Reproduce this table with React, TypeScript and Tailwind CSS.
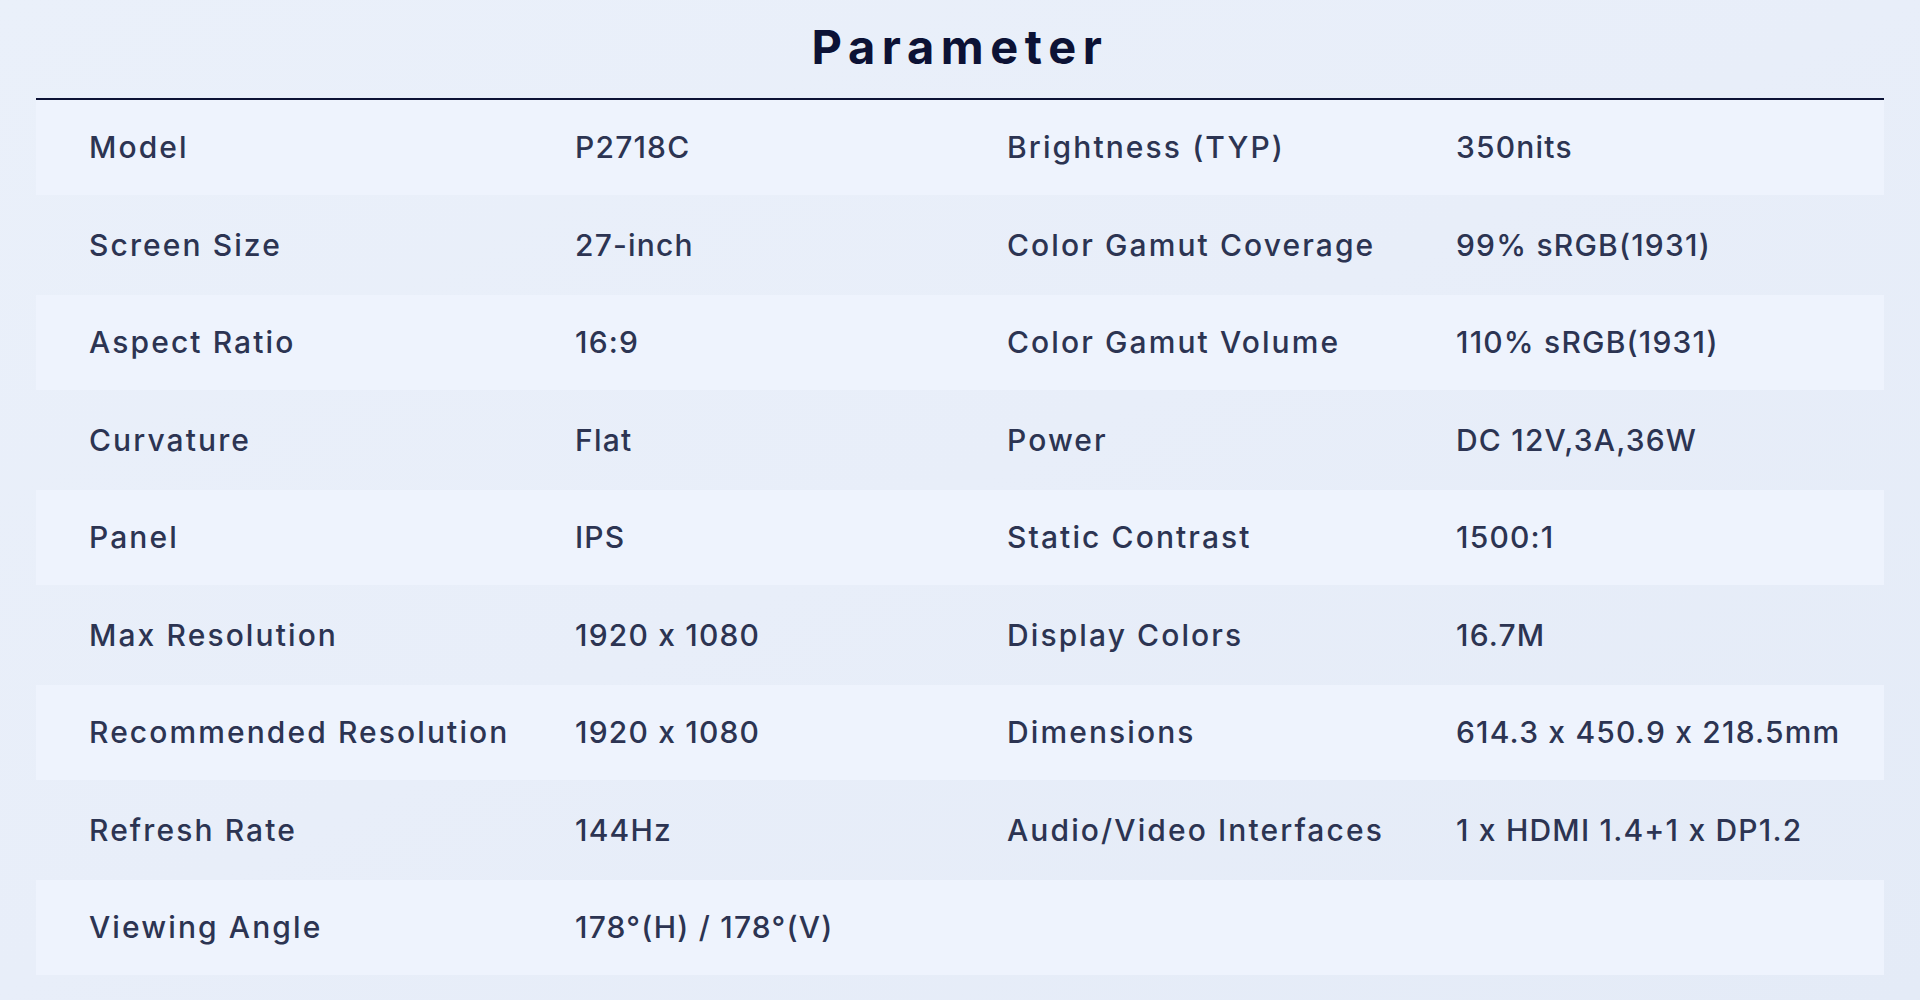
const rows: [string, string, string, string][] = [
  ["Model", "P2718C", "Brightness (TYP)", "350nits"],
  ["Screen Size", "27-inch", "Color Gamut Coverage", "99% sRGB(1931)"],
  ["Aspect Ratio", "16:9", "Color Gamut Volume", "110% sRGB(1931)"],
  ["Curvature", "Flat", "Power", "DC 12V,3A,36W"],
  ["Panel", "IPS", "Static Contrast", "1500:1"],
  ["Max Resolution", "1920 x 1080", "Display Colors", "16.7M"],
  ["Recommended Resolution", "1920 x 1080", "Dimensions", "614.3 x 450.9 x 218.5mm"],
  ["Refresh Rate", "144Hz", "Audio/Video Interfaces", "1 x HDMI 1.4+1 x DP1.2"],
  ["Viewing Angle", "178°(H) / 178°(V)", "", ""],
];

const App = () => {
  return (
    <div className="min-h-screen w-full bg-gradient-to-br from-[#eaf0fa] via-[#e8eef9] to-[#e4ebf7] font-['Inter','Open_Sans',sans-serif]">
      <div className="px-[36px]">
        <h1 className="flex h-[98px] items-center justify-center pb-[4px] text-[47px] font-bold tracking-[0.14em] text-[#0c1235]">
          Parameter
        </h1>
        <div className="h-[2px] bg-[#0c1235]" />
        <div className="flex flex-col">
          {rows.map((r, i) => (
            <div
              key={r[0]}
              className={
                i % 2 === 0
                  ? "flex h-[95px] items-center bg-[#eef3fd] text-[30px] font-medium text-[#2c3452]"
                  : "flex h-[100px] items-center text-[30px] font-medium text-[#2c3452]"
              }
            >
              <div className="w-[486px] shrink-0 pl-[53px] tracking-[0.07em]">{r[0]}</div>
              <div className="w-[432px] shrink-0 pl-[53px] tracking-[0.04em]">{r[1]}</div>
              <div className="w-[449px] shrink-0 pl-[53px] tracking-[0.07em]">{r[2]}</div>
              <div className="flex-1 pl-[53px] tracking-[0.04em]">{r[3]}</div>
            </div>
          ))}
        </div>
      </div>
    </div>
  );
};

export default App;
